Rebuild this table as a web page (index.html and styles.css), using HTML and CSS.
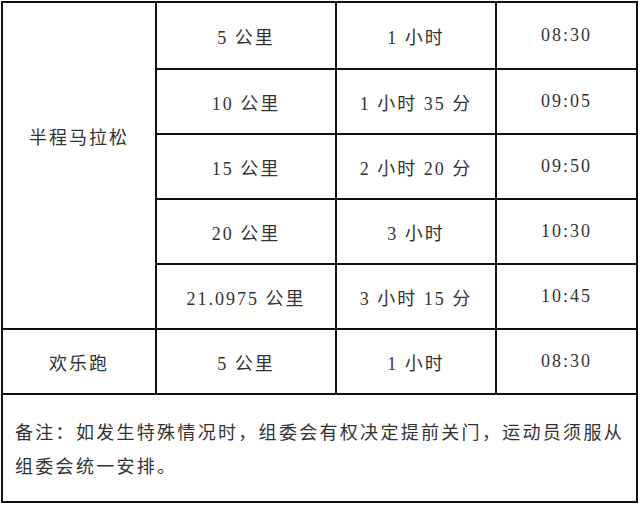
FILE: index.html
```html
<!DOCTYPE html>
<html lang="zh-CN">
<head>
<meta charset="utf-8">
<title>关门时间</title>
<link rel="stylesheet" href="styles.css">
</head>
<body>
<table class="schedule">
  <colgroup>
    <col class="c1"><col class="c2"><col class="c3"><col class="c4">
  </colgroup>
  <tbody>
    <tr class="r-first">
      <td class="group" rowspan="5">半程马拉松</td>
      <td>5 公里</td>
      <td>1 小时</td>
      <td>08:30</td>
    </tr>
    <tr class="r">
      <td>10 公里</td>
      <td>1 小时 35 分</td>
      <td>09:05</td>
    </tr>
    <tr class="r">
      <td>15 公里</td>
      <td>2 小时 20 分</td>
      <td>09:50</td>
    </tr>
    <tr class="r">
      <td>20 公里</td>
      <td>3 小时</td>
      <td>10:30</td>
    </tr>
    <tr class="r">
      <td>21.0975 公里</td>
      <td>3 小时 15 分</td>
      <td>10:45</td>
    </tr>
    <tr class="r">
      <td>欢乐跑</td>
      <td>5 公里</td>
      <td>1 小时</td>
      <td>08:30</td>
    </tr>
    <tr>
      <td class="note" colspan="4">备注：如发生特殊情况时，组委会有权决定提前关门，运动员须服从组委会统一安排。</td>
    </tr>
  </tbody>
</table>
</body>
</html>
```

FILE: styles.css
```css
html, body {
  margin: 0;
  padding: 0;
  background: #ffffff;
}

body {
  padding: 1px 0 0 1px;
}

.schedule {
  border-collapse: collapse;
  table-layout: fixed;
  width: 635px;
  font-family: "Liberation Serif", "Noto Sans CJK SC", serif;
  font-size: 18px;
  color: #333333;
  letter-spacing: 2px;
}

.c1 { width: 154px; }
.c2 { width: 180px; }
.c3 { width: 160px; }
.c4 { width: 141px; }

.schedule td {
  border: 2px solid #111;
  padding: 0;
  text-align: center;
  vertical-align: middle;
}

.schedule td.group {
  padding-bottom: 60px;
}

.r-first { height: 67px; }
.r { height: 65px; }

.schedule td.note {
  text-align: left;
  height: 72px;
  padding: 19px 0 15px 12px;
  line-height: 34px;
  letter-spacing: 2.3px;
}
```
